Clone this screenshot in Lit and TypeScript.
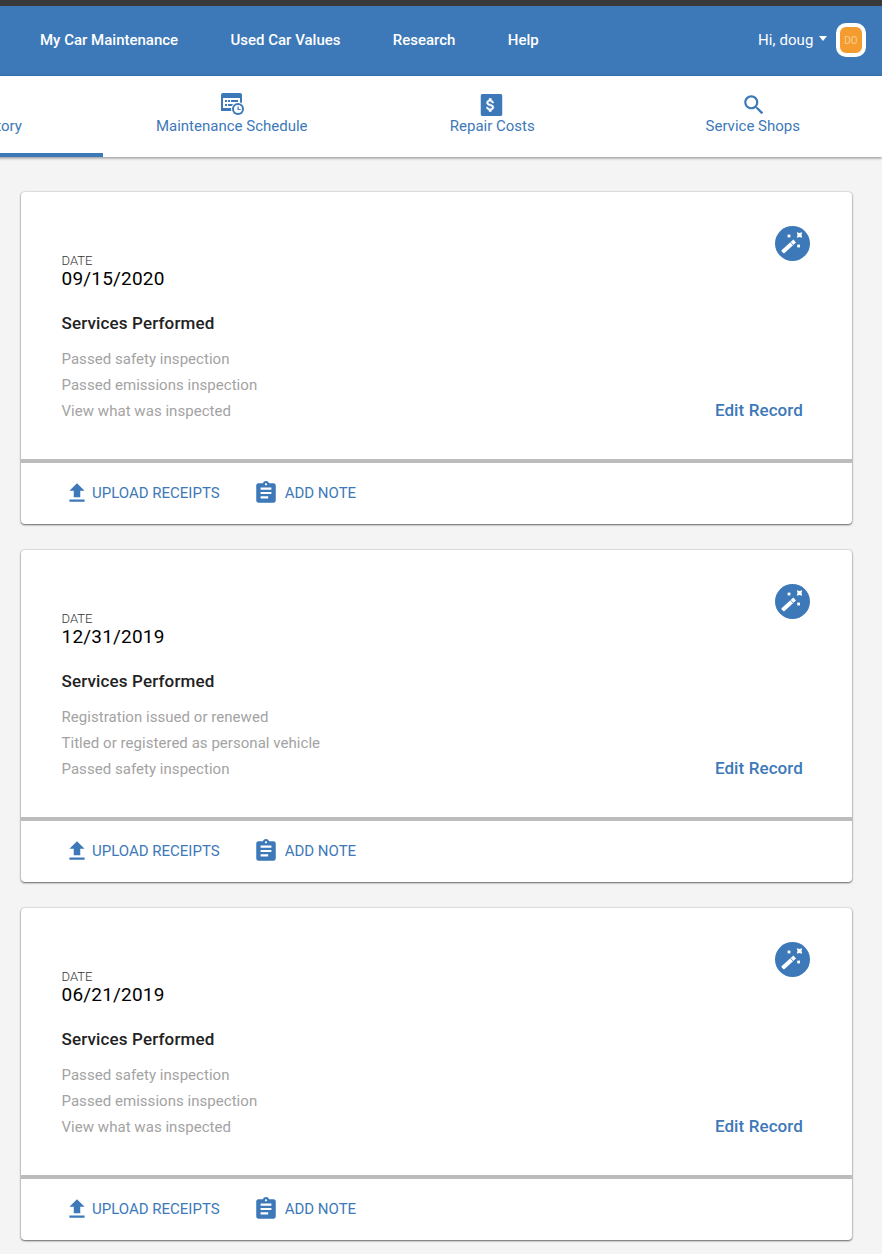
import { LitElement, html, css } from "lit";
import { customElement } from "lit/decorators.js";

const records = [
  { date: "09/15/2020", items: ["Passed safety inspection", "Passed emissions inspection", "View what was inspected"] },
  { date: "12/31/2019", items: ["Registration issued or renewed", "Titled or registered as personal vehicle", "Passed safety inspection"] },
  { date: "06/21/2019", items: ["Passed safety inspection", "Passed emissions inspection", "View what was inspected"] },
];

const scheduleIcon = html`<svg class="ic-shift" viewBox="0 0 26 24" width="26" height="24">
  <path fill="#3d78b9" d="M2 0h17a2 2 0 0 1 2 2v16h-21V2a2 2 0 0 1 2-2z" transform="translate(1 0)"/>
  <rect x="3" y="5" width="17" height="10" fill="#fff"/>
  <rect x="5" y="7" width="2" height="2" fill="#3d78b9"/><rect x="8" y="7" width="2" height="2" fill="#3d78b9"/><rect x="11" y="7" width="7" height="2" fill="#3d78b9"/>
  <rect x="5" y="11" width="2" height="2" fill="#3d78b9"/><rect x="8" y="11" width="5" height="2" fill="#3d78b9"/>
  <circle cx="18" cy="16" r="7" fill="#fff"/><circle cx="18" cy="16" r="6" fill="#3d78b9"/><circle cx="18" cy="16" r="4" fill="#fff"/>
  <path d="M17.5 13.5h1.2v2.4h2v1.2h-3.2z" fill="#3d78b9"/>
</svg>`;

const dollarIcon = html`<svg class="ic-dollar" viewBox="0 0 22 22" width="22" height="22">
  <rect width="22" height="22" rx="2" fill="#3d78b9"/>
  <g transform="translate(1.4 2.4) scale(.72)"><path fill="#fff" stroke="#fff" stroke-width=".8" d="M11.8 10.9c-2.27-.59-3-1.2-3-2.15 0-1.09 1.01-1.85 2.7-1.85 1.78 0 2.44.85 2.5 2.1h2.21c-.07-1.72-1.12-3.3-3.21-3.81V3h-3v2.16c-1.94.42-3.5 1.68-3.5 3.61 0 2.31 1.91 3.46 4.7 4.13 2.5.6 3 1.48 3 2.41 0 .69-.49 1.79-2.7 1.79-2.06 0-2.87-.92-2.98-2.1h-2.2c.12 2.19 1.76 3.42 3.68 3.83V21h3v-2.15c1.95-.37 3.5-1.5 3.5-3.55 0-2.84-2.43-3.81-4.7-4.4z"/></g>
</svg>`;

const searchIcon = html`<svg class="ic-shift" viewBox="0 0 24 24" width="26" height="26"><path fill="#3d78b9" d="M15.5 14h-.79l-.28-.27C15.41 12.59 16 11.11 16 9.5 16 5.91 13.09 3 9.5 3S3 5.91 3 9.5 5.91 16 9.5 16c1.61 0 3.09-.59 4.23-1.57l.27.28v.79l5 4.99L20.49 19l-4.99-5zm-6 0C7.01 14 5 11.99 5 9.5S7.01 5 9.5 5 14 7.01 14 9.5 11.99 14 9.5 14z"/></svg>`;

const uploadIcon = html`<svg viewBox="0 0 24 24" width="26" height="26"><path fill="#3d78b9" d="M9 16h6v-6h4l-7-7-7 7h4zm-4 2h14v2H5z"/></svg>`;

const noteIcon = html`<svg viewBox="0 0 24 24" width="26" height="26"><path fill="#3d78b9" d="M19 3h-4.18C14.4 1.84 13.3 1 12 1c-1.3 0-2.4.84-2.82 2H5c-1.1 0-2 .9-2 2v14c0 1.1.9 2 2 2h14c1.1 0 2-.9 2-2V5c0-1.1-.9-2-2-2zm-7 0c.55 0 1 .45 1 1s-.45 1-1 1-1-.45-1-1 .45-1 1-1zm2 14H7v-2h7v2zm3-4H7v-2h10v2zm0-4H7V7h10v2z"/></svg>`;

const wandIcon = html`<svg viewBox="0 0 35 35" width="35" height="35">
  <circle cx="17.5" cy="17.5" r="17.5" fill="#3d78b9"/>
  <path fill="#fff" d="M6.8 24 18.4 13.6 21 16.6 9.6 27a1 1 0 0 1-1.4 0L6.7 25.4a1 1 0 0 1 .1-1.4z"/>
  <path stroke="#3d78b9" stroke-width=".8" d="M15.6 16.2l2.4 2.8"/>
  <rect x="12.6" y="8.6" width="2.8" height="2.8" fill="#fff"/>
  <path fill="#fff" d="M21.8 6.3 24.5 7 27.2 6.3 26.5 9 27.2 11.7 24.5 11 21.8 11.7 22.5 9z"/>
  <rect x="22.2" y="18.6" width="2.8" height="2.8" fill="#fff"/>
</svg>`;

@customElement("app-root")
export class AppRoot extends LitElement {
  static styles = css`
    :host {
      display: block;
      min-height: 1254px;
      background: #f4f4f4;
      font-family: Roboto, "Liberation Sans", sans-serif;
      overflow: hidden;
    }
    .topline { height: 6px; background: #393939; }
    .nav {
      height: 68px;
      background: #3d78b9;
      display: flex;
      align-items: center;
      padding: 0 16px 2px 40px;
      color: #fff;
      font-size: 15px;
      font-weight: 500;
    }
    .links { display: flex; gap: 52.3px; flex: 1; }
    .user { display: flex; align-items: center; font-weight: 400; letter-spacing: .1px; }
    .caret {
      width: 0; height: 0;
      margin: 0 9px 0 5.5px;
      border-left: 4.5px solid transparent;
      border-right: 4.5px solid transparent;
      border-top: 5px solid #fff;
      transform: translateY(-2px);
    }
    .avatar {
      width: 22px; height: 26px;
      border: 4px solid #fff;
      border-radius: 10px;
      background: #f59c2e;
      color: #f7cf95;
      font-size: 10px;
      letter-spacing: 0;
      display: flex; align-items: center; justify-content: center;
    }
    .tabs {
      height: 81px;
      background: #fff;
      display: flex;
      margin-left: -159px;
      box-shadow: 0 1px 3px rgba(0,0,0,.45);
      position: relative;
    }
    .tab {
      width: 260.5px;
      flex: none;
      box-sizing: border-box;
      display: flex;
      flex-direction: column;
      align-items: center;
      color: #3d78b9;
      font-size: 15px;
    }
    .tab .icon { height: 26px; margin-top: 16px; display: flex; align-items: center; justify-content: center; }
    .tab .label { line-height: 20px; margin-top: -2px; }
    .tab.active { border-bottom: 4px solid #3d78b9; width: 261.5px; margin-right: -1px; }
    .ic-dollar { transform: translateX(-.5px); }
    .ic-shift { transform: translateX(1px); }
    .list { padding: 35px 30px 14px 21px; display: flex; flex-direction: column; gap: 26px; }
    .card {
      background: #fff;
      border-radius: 4px;
      box-shadow: 0 1px 2px rgba(0,0,0,.55), 0 0 2px rgba(0,0,0,.25);
    }
    .body {
      height: 267px;
      box-sizing: border-box;
      display: flex;
      justify-content: space-between;
      padding-left: 40.5px;
    }
    .left { padding-top: 62px; }
    .date-label { font-size: 13px; font-weight: 300; line-height: 13px; color: #333; }
    .date { font-size: 19px; line-height: 24px; color: #000; letter-spacing: .2px; }
    .services { font-size: 17px; font-weight: 500; line-height: 24px; color: #222; margin-top: 20px; letter-spacing: .14px; }
    .items { margin-top: 11px; }
    .item { font-size: 15px; line-height: 26px; color: #a3a3a3; letter-spacing: .04px; }
    .right {
      display: flex; flex-direction: column; justify-content: space-between; align-items: flex-end;
      padding: 34px 49px 37px 0;
    }
    .wand { height: 35px; margin-right: -7px; }
    .edit { font-size: 17px; font-weight: 500; line-height: 24px; color: #3d78b9; letter-spacing: .1px; }
    .foot {
      height: 59px;
      border-top: 4px solid #bcbcbc;
      display: flex;
      align-items: center;
      padding: 0 0 2px 43px;
      color: #3d78b9;
      font-size: 15px;
    }
    .act { display: flex; align-items: center; gap: 2px; }
    .act.note { gap: 6px; margin-left: 33px; }
    .act svg { display: block; }
  `;

  render() {
    return html`
      <div class="topline"></div>
      <div class="nav">
        <div class="links">
          <span>My Car Maintenance</span><span>Used Car Values</span><span>Research</span><span>Help</span>
        </div>
        <div class="user"><span>Hi, doug</span><span class="caret"></span><span class="avatar">DO</span></div>
      </div>
      <div class="tabs">
        <div class="tab active"><div class="icon"></div><div class="label">Service History</div></div>
        <div class="tab"><div class="icon">${scheduleIcon}</div><div class="label">Maintenance Schedule</div></div>
        <div class="tab"><div class="icon">${dollarIcon}</div><div class="label">Repair Costs</div></div>
        <div class="tab"><div class="icon">${searchIcon}</div><div class="label">Service Shops</div></div>
      </div>
      <div class="list">
        ${records.map(r => html`
          <div class="card">
            <div class="body">
              <div class="left">
                <div class="date-label">DATE</div>
                <div class="date">${r.date}</div>
                <div class="services">Services Performed</div>
                <div class="items">${r.items.map(i => html`<div class="item">${i}</div>`)}</div>
              </div>
              <div class="right">
                <div class="wand">${wandIcon}</div>
                <div class="edit">Edit Record</div>
              </div>
            </div>
            <div class="foot">
              <div class="act">${uploadIcon}<span>UPLOAD RECEIPTS</span></div>
              <div class="act note">${noteIcon}<span>ADD NOTE</span></div>
            </div>
          </div>
        `)}
      </div>
    `;
  }
}
